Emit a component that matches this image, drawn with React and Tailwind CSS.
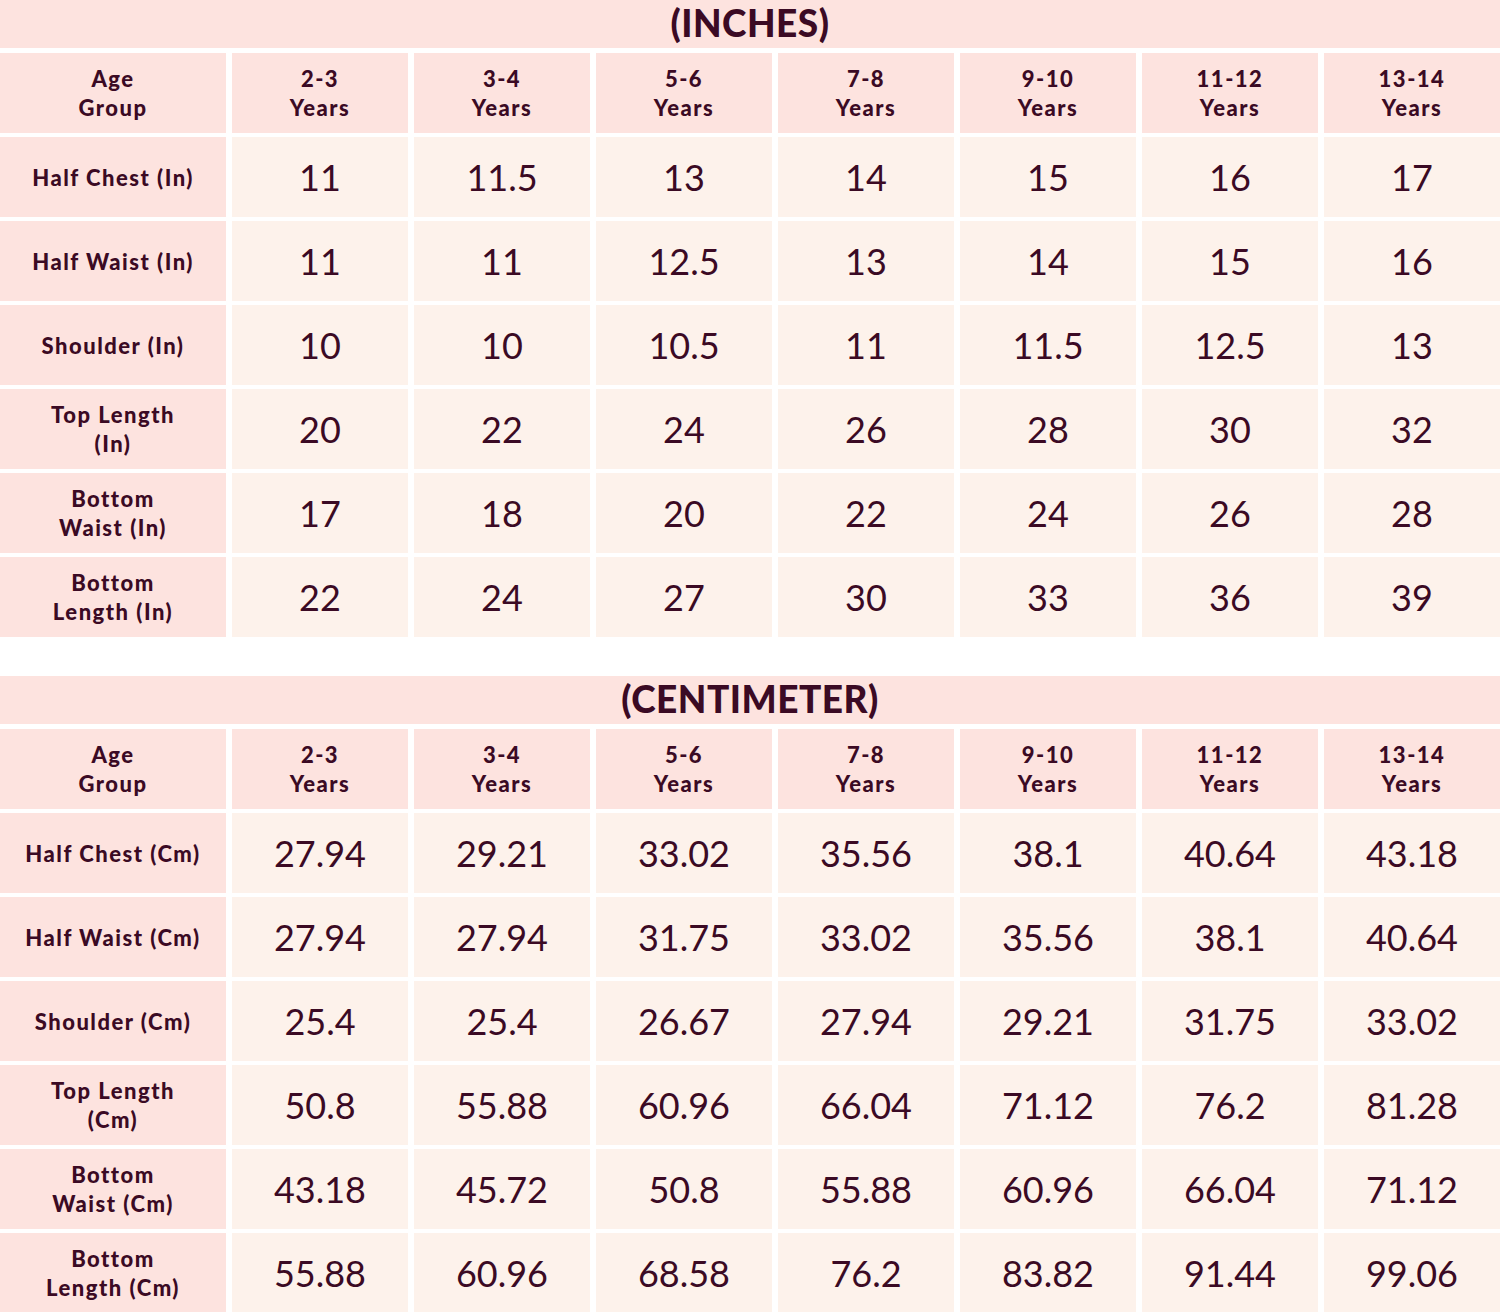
const ages = ["2-3", "3-4", "5-6", "7-8", "9-10", "11-12", "13-14"];

const inches = [
  { label: ["Half Chest (In)"], values: ["11", "11.5", "13", "14", "15", "16", "17"] },
  { label: ["Half Waist (In)"], values: ["11", "11", "12.5", "13", "14", "15", "16"] },
  { label: ["Shoulder (In)"], values: ["10", "10", "10.5", "11", "11.5", "12.5", "13"] },
  { label: ["Top Length", "(In)"], values: ["20", "22", "24", "26", "28", "30", "32"] },
  { label: ["Bottom", "Waist (In)"], values: ["17", "18", "20", "22", "24", "26", "28"] },
  { label: ["Bottom", "Length (In)"], values: ["22", "24", "27", "30", "33", "36", "39"] },
];

const cms = [
  { label: ["Half Chest (Cm)"], values: ["27.94", "29.21", "33.02", "35.56", "38.1", "40.64", "43.18"] },
  { label: ["Half Waist (Cm)"], values: ["27.94", "27.94", "31.75", "33.02", "35.56", "38.1", "40.64"] },
  { label: ["Shoulder (Cm)"], values: ["25.4", "25.4", "26.67", "27.94", "29.21", "31.75", "33.02"] },
  { label: ["Top Length", "(Cm)"], values: ["50.8", "55.88", "60.96", "66.04", "71.12", "76.2", "81.28"] },
  { label: ["Bottom", "Waist (Cm)"], values: ["43.18", "45.72", "50.8", "55.88", "60.96", "66.04", "71.12"] },
  { label: ["Bottom", "Length (Cm)"], values: ["55.88", "60.96", "68.58", "76.2", "83.82", "91.44", "99.06"] },
];

function Label({ lines }) {
  return (
    <div className="bg-[#fde3df] flex flex-col items-center justify-center text-[22px] leading-[29px] font-black tracking-[1.5px] text-center">
      {lines.map((l) => (
        <span key={l}>{l}</span>
      ))}
    </div>
  );
}

function SizeTable({ title, rows }) {
  return (
    <section>
      <div className="h-[48px] bg-[#fde3df] flex items-center justify-center pb-[4px]">
        <h2 className="text-[37px] leading-none font-black tracking-[0.5px]">{title}</h2>
      </div>
      <div className="mt-[5px] grid grid-cols-[226px_repeat(7,176px)] gap-x-[6px] gap-y-[4px] auto-rows-[80px]">
        <Label lines={["Age", "Group"]} />
        {ages.map((a) => (
          <Label key={a} lines={[a, "Years"]} />
        ))}
        {rows.map((row) => (
          <>
            <Label key={row.label.join()} lines={row.label} />
            {row.values.map((v, i) => (
              <div
                key={row.label.join() + i}
                className="bg-[#fdf2eb] flex items-center justify-center text-[36px]"
              >
                {v}
              </div>
            ))}
          </>
        ))}
      </div>
    </section>
  );
}

export default function App() {
  return (
    <div className="w-[1500px] bg-white text-[#3b0a24] font-['Lato',sans-serif]">
      <SizeTable title="(INCHES)" rows={inches} />
      <div className="h-[39px]" />
      <SizeTable title="(CENTIMETER)" rows={cms} />
    </div>
  );
}
